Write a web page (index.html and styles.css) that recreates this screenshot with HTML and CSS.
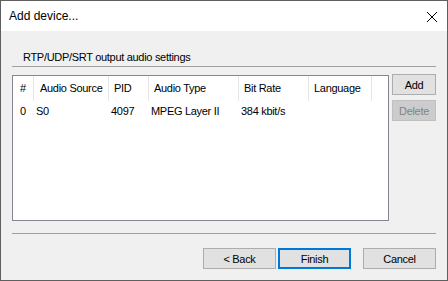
FILE: index.html
```html
<!DOCTYPE html>
<html lang="en">
<head>
    <meta charset="UTF-8">
    <title>Add device...</title>
    <link rel="stylesheet" href="styles.css">
</head>
<body>
    <div class="window">
        <div class="titlebar">
            <span class="title">Add device...</span>
            <svg class="close" width="12" height="12" viewBox="0 0 12 12">
                <path d="M1 1 L11 11 M11 1 L1 11" stroke="#000" stroke-width="1"/>
            </svg>
        </div>
        <div class="content">
            <div class="group_label">RTP/UDP/SRT output audio settings</div>
            <div class="line"></div>
            <div class="list_row">
                <div class="listview">
                    <div class="lv_header">
                        <span class="c0">#</span>
                        <span class="c1">Audio Source</span>
                        <span class="c2">PID</span>
                        <span class="c3">Audio Type</span>
                        <span class="c4">Bit Rate</span>
                        <span class="c5">Language</span>
                    </div>
                    <div class="lv_item">
                        <span class="c0">0</span>
                        <span class="c1">S0</span>
                        <span class="c2">4097</span>
                        <span class="c3">MPEG Layer II</span>
                        <span class="c4">384 kbit/s</span>
                        <span class="c5"></span>
                    </div>
                </div>
                <div class="side_buttons">
                    <button class="btn small">Add</button>
                    <button class="btn small" disabled>Delete</button>
                </div>
            </div>
            <div class="line bottom_line"></div>
            <div class="footer">
                <button class="btn">&lt; Back</button>
                <button class="btn default">Finish</button>
                <button class="btn cancel">Cancel</button>
            </div>
        </div>
    </div>
</body>
</html>
```

FILE: styles.css
```css
*,
*::before,
*::after{
    padding: 0;
    margin: 0;
    box-sizing: border-box;
}

body{
    background: #fff;
    font: 11px "Liberation Sans", Arial, sans-serif;
    color: #000;
}

.window{
    width: 448px;
    height: 281px;
    border: 1px solid #5f5f5f;
    display: flex;
    flex-direction: column;
}

.titlebar{
    height: 30px;
    background: #fff;
    display: flex;
    align-items: center;
    justify-content: space-between;
    padding: 0 9px 0 8px;
}
.titlebar .title{
    font-size: 12px;
}
.titlebar .close{
    display: block;
    margin-top: 1px;
}

.content{
    flex-grow: 1;
    background: #f0f0f0;
    padding: 0 11px;
    display: flex;
    flex-direction: column;
    letter-spacing: -0.3px;
}

.group_label{
    margin-top: 18px;
    padding-left: 11px;
    height: 16px;
    line-height: 16px;
}

.line{
    height: 1px;
    background: #a0a0a0;
    margin-top: 1px;
}

.list_row{
    display: flex;
    margin-top: 8px;
}

.listview{
    width: 378px;
    height: 146px;
    border: 1px solid #828790;
    background: #fff;
}

.lv_header,
.lv_item{
    display: flex;
    white-space: nowrap;
}
.lv_header{
    height: 25px;
    align-items: center;
}
.lv_header span{
    height: 25px;
    line-height: 24px;
    border-right: 1px solid #e5e5e5;
    padding-left: 5px;
}
.lv_item{
    margin-top: 2px;
    height: 17px;
    line-height: 17px;
}
.lv_item span{
    padding-left: 2px;
}
.lv_header .c0,
.lv_item .c0{
    padding-left: 7px;
}
.lv_header .c1{
    padding-left: 6px;
}

.c0{ width: 21px; }
.c1{ width: 75px; }
.c2{ width: 40px; }
.c3{ width: 90px; }
.c4{ width: 70px; }
.c5{ width: 63px; }

.side_buttons{
    display: flex;
    flex-direction: column;
    gap: 5px;
    margin-left: 3px;
    margin-top: -1px;
}

.btn{
    font: 11px "Liberation Sans", Arial, sans-serif;
    letter-spacing: -0.3px;
    color: #000;
    background: #e1e1e1;
    border: 1px solid #adadad;
    width: 73px;
    height: 21px;
}
.btn.small{
    width: 44px;
}
.btn:disabled{
    background: #cccccc;
    border-color: #bfbfbf;
    color: #838383;
}
.btn.default{
    border: 2px solid #0078d7;
}

.bottom_line{
    margin-top: 12px;
}

.footer{
    display: flex;
    justify-content: flex-end;
    gap: 2px;
    margin-top: 14px;
}
.footer .cancel{
    margin-left: 10px;
}
```
